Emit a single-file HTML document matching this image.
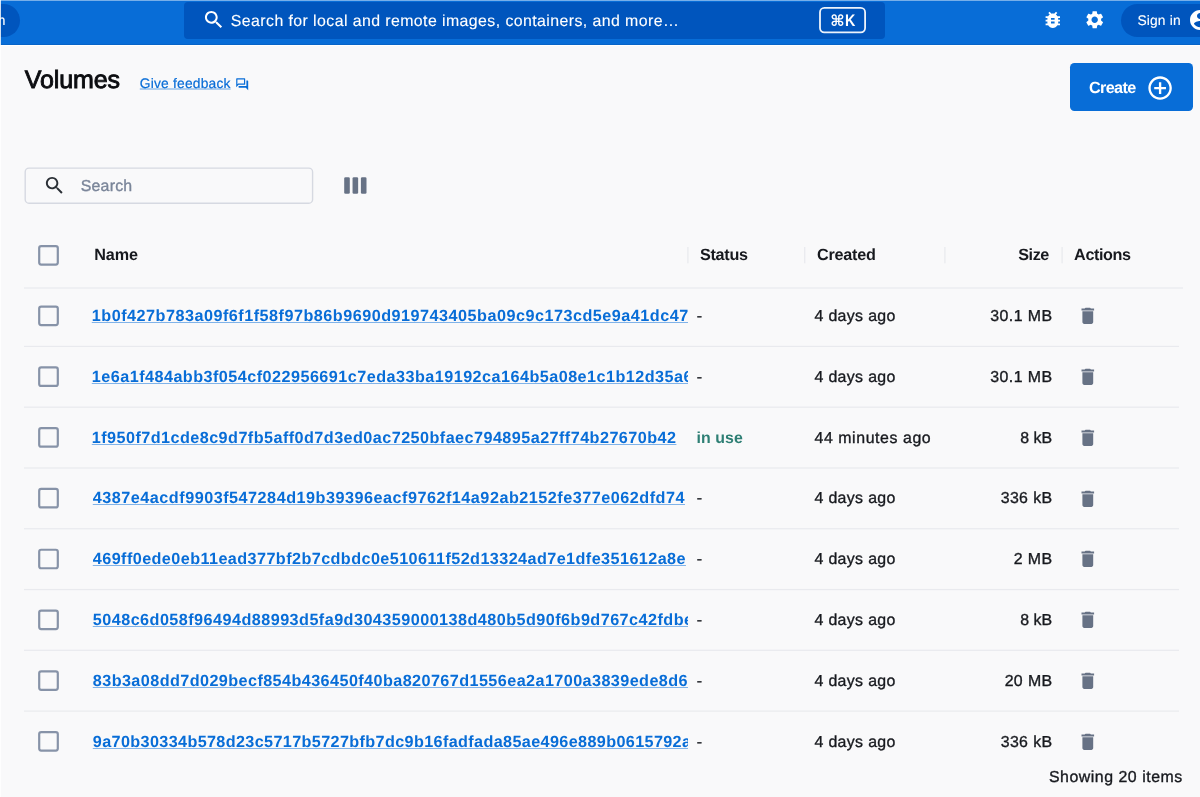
<!DOCTYPE html>
<html><head><meta charset="utf-8"><title>Volumes</title><style>
html,body{margin:0;padding:0}
body{text-rendering:geometricPrecision;width:1200px;height:797px;overflow:hidden;position:relative;background:#f9f9fa;font-family:"Liberation Sans", "DejaVu Sans", sans-serif;}
#w{position:absolute;left:0;top:0;width:1200px;height:797px;will-change:transform}
.t{position:absolute;white-space:nowrap;line-height:1;display:block}
.clip{position:absolute;overflow:hidden}
.lk{text-decoration:underline;text-decoration-color:rgba(8,109,215,.5);text-decoration-thickness:1.1px;text-underline-offset:0.6px;}
</style></head><body><div id="w">
<div style="position:absolute;left:0;top:0;width:1200px;height:44.8px;background:#086dd7"></div>
<div style="position:absolute;left:0;top:43.8px;width:1200px;height:1px;background:#0764c8"></div>
<div style="position:absolute;left:-80px;top:3.7px;width:100px;height:33.2px;border-radius:17px;background:#0055bd"></div>
<div style="position:absolute;left:183.8px;top:1.8px;width:701.2px;height:37.1px;border-radius:4px;background:#0055bd"></div>
<svg style="position:absolute;left:202.1px;top:8.4px" width="23.5" height="23.5" viewBox="0 0 24 24"><path fill="#fff" d="M15.5 14h-.79l-.28-.27C15.41 12.59 16 11.11 16 9.5 16 5.91 13.09 3 9.5 3S3 5.91 3 9.5 5.91 16 9.5 16c1.610 0 3.090-.59 4.230-1.570l.27.28v.79l5 4.990L20.490 19l-4.990-5zm-6 0C7.010 14 5 11.990 5 9.500S7.010 5 9.500 5 14 7.010 14 9.500 11.990 14 9.500 14z"/></svg>
<svg style="position:absolute;left:1042.35px;top:9.0px" width="21.6" height="21.6" viewBox="0 0 24 24"><path fill="#fff" d="M20 8h-2.810c-.45-.78-1.070-1.450-1.820-1.960L17 4.410 15.590 3l-2.170 2.170C12.960 5.060 12.490 5 12 5c-.49 0-.96.060-1.410.17L8.410 3 7 4.410l1.620 1.630C7.880 6.550 7.260 7.220 6.810 8H4v2h2.090c-.05.33-.09.66-.09 1v1H4v2h2v1c0 .34.040.67.090 1H4v2h2.810c1.040 1.790 2.970 3 5.190 3s4.150-1.210 5.190-3H20v-2h-2.090c.05-.33.090-.67.090-1v-1h2v-2h-2v-1c0-.34-.04-.67-.09-1H20V8zm-6 8h-4v-2h4v2zm0-4h-4v-2h4v2z"/></svg>
<svg style="position:absolute;left:1084.2px;top:9.1px" width="21.4" height="21.4" viewBox="0 0 24 24"><path fill="#fff" d="M19.14 12.94c.04-.3.06-.61.06-.94 0-.32-.02-.64-.07-.94l2.030-1.580c.18-.14.23-.41.120-.61l-1.920-3.320c-.12-.22-.37-.29-.59-.22l-2.390.96c-.5-.38-1.030-.7-1.620-.94l-.36-2.540c-.04-.24-.24-.41-.48-.41h-3.840c-.24 0-.43.17-.47.41l-.36 2.540c-.59.24-1.130.57-1.620.94l-2.390-.96c-.22-.08-.47 0-.59.22L2.740 8.870c-.12.21-.08.47.12.61l2.030 1.580c-.05.3-.09.63-.09.94s.02.64.07.94l-2.030 1.580c-.18.14-.23.41-.12.61l1.920 3.320c.12.22.37.29.59.22l2.390-.96c.5.38 1.030.7 1.620.94l.36 2.540c.05.24.24.41.48.41h3.840c.24 0 .44-.17.47-.41l.36-2.540c.59-.24 1.130-.56 1.620-.94l2.390.96c.22.08.47 0 .59-.22l1.920-3.320c.12-.22.07-.47-.12-.61l-2.010-1.580zM12 15.600c-1.980 0-3.600-1.620-3.600-3.600s1.620-3.600 3.600-3.600 3.600 1.620 3.600 3.600-1.620 3.600-3.600 3.600z"/></svg>
<div style="position:absolute;left:1120.8px;top:3.75px;width:120px;height:33px;border-radius:16.5px;background:#0055bd"></div>
<svg style="position:absolute;left:1187.8px;top:8.3px" width="24" height="24" viewBox="0 0 24 24"><path fill="#fff" d="M12 2C6.480 2 2 6.480 2 12s4.480 10 10 10 10-4.480 10-10S17.520 2 12 2zm0 3c1.660 0 3 1.340 3 3s-1.340 3-3 3-3-1.340-3-3 1.340-3 3-3zm0 14.200c-2.500 0-4.710-1.280-6-3.220.03-1.990 4-3.080 6-3.080 1.990 0 5.970 1.090 6 3.080-1.290 1.940-3.500 3.220-6 3.220z"/></svg>
<div style="position:absolute;left:0;top:45px;width:1200px;height:1px;background:#fff"></div>
<div style="position:absolute;left:0;top:0;width:1200px;height:1px;background:rgba(255,255,255,.45)"></div>
<div style="position:absolute;left:0;top:0;width:1px;height:797px;background:rgba(255,255,255,.82)"></div>
<svg style="position:absolute;left:235px;top:77.1px" width="14.4" height="14.4" viewBox="0 0 24 24"><path fill="#086dd7" d="M15 4v7H5.170L4 12.170V4h11m1-2H3c-.55 0-1 .45-1 1v14l4-4h10c.55 0 1-.45 1-1V3c0-.55-.45-1-1-1zm5 4h-2v9H6v2c0 .55.45 1 1 1h11l4 4V7c0-.55-.45-1-1-1z"/></svg>
<div style="position:absolute;left:1070px;top:63.1px;width:122.8px;height:47.8px;border-radius:4.5px;background:#086dd7"></div>
<svg style="position:absolute;left:1145.9px;top:73.6px" width="28.2" height="28.2" viewBox="0 0 24 24"><path fill="#fff" d="M13 7h-2v4H7v2h4v4h2v-4h4v-2h-4V7zm-1-5C6.480 2 2 6.480 2 12s4.480 10 10 10 10-4.480 10-10S17.520 2 12 2zm0 18c-4.410 0-8-3.590-8-8s3.590-8 8-8 8 3.590 8 8-3.590 8-8 8z"/></svg>
<svg style="position:absolute;left:42.8px;top:174.2px" width="23" height="23" viewBox="0 0 24 24"><path fill="#2b3036" d="M15.5 14h-.79l-.28-.27C15.410 12.590 16 11.110 16 9.500 16 5.910 13.090 3 9.500 3S3 5.910 3 9.500 5.910 16 9.500 16c1.610 0 3.090-.59 4.230-1.570l.27.28v.79l5 4.990L20.490 19l-4.990-5zm-6 0C7.010 14 5 11.990 5 9.500S7.010 5 9.500 5 14 7.010 14 9.500 11.990 14 9.500 14z"/></svg>
<svg style="position:absolute;left:0;top:0" width="1200" height="797" viewBox="0 0 1200 797">
<rect x="820" y="7.9" width="45.1" height="24.5" rx="4.3" fill="none" stroke="#fff" stroke-opacity=".93" stroke-width="1.8"/>
<rect x="25.2" y="168.1" width="287.4" height="35.1" rx="3.8" fill="none" stroke="#d6d9e1" stroke-width="1.4"/>
<rect x="344.2" y="177.3" width="5.6" height="16.5" rx="1.3" fill="#677285"/>
<rect x="352.55" y="177.3" width="5.6" height="16.5" rx="1.3" fill="#677285"/>
<rect x="360.9" y="177.3" width="5.6" height="16.5" rx="1.3" fill="#677285"/>
<rect x="687.2" y="247" width="1.4" height="16.3" fill="#eaebef"/>
<rect x="804.0" y="247" width="1.4" height="16.3" fill="#eaebef"/>
<rect x="944.2" y="247" width="1.4" height="16.3" fill="#eaebef"/>
<rect x="1061.4" y="247" width="1.4" height="16.3" fill="#eaebef"/>
<rect x="24" y="286.95" width="1159" height="2.0" fill="#eff0f3"/>
<rect x="24" y="345.80" width="1155" height="1.2" fill="#e9eaee"/>
<rect x="24" y="406.59" width="1155" height="1.2" fill="#e9eaee"/>
<rect x="24" y="467.37" width="1155" height="1.2" fill="#e9eaee"/>
<rect x="24" y="528.16" width="1155" height="1.2" fill="#e9eaee"/>
<rect x="24" y="588.94" width="1155" height="1.2" fill="#e9eaee"/>
<rect x="24" y="649.73" width="1155" height="1.2" fill="#e9eaee"/>
<rect x="24" y="710.52" width="1155" height="1.2" fill="#e9eaee"/>
<rect x="39.2" y="246.05" width="18.6" height="18.5" rx="2" fill="none" stroke="#8793a8" stroke-width="2.2"/>
<rect x="39.2" y="306.60" width="18.6" height="18.5" rx="2" fill="none" stroke="#8793a8" stroke-width="2.2"/>
<rect x="39.2" y="367.39" width="18.6" height="18.5" rx="2" fill="none" stroke="#8793a8" stroke-width="2.2"/>
<rect x="39.2" y="428.17" width="18.6" height="18.5" rx="2" fill="none" stroke="#8793a8" stroke-width="2.2"/>
<rect x="39.2" y="488.96" width="18.6" height="18.5" rx="2" fill="none" stroke="#8793a8" stroke-width="2.2"/>
<rect x="39.2" y="549.74" width="18.6" height="18.5" rx="2" fill="none" stroke="#8793a8" stroke-width="2.2"/>
<rect x="39.2" y="610.53" width="18.6" height="18.5" rx="2" fill="none" stroke="#8793a8" stroke-width="2.2"/>
<rect x="39.2" y="671.32" width="18.6" height="18.5" rx="2" fill="none" stroke="#8793a8" stroke-width="2.2"/>
<rect x="39.2" y="732.10" width="18.6" height="18.5" rx="2" fill="none" stroke="#8793a8" stroke-width="2.2"/>
</svg>
<svg style="position:absolute;left:1076.8px;top:305.25px" width="21.6" height="21.6" viewBox="0 0 24 24"><path fill="#677285" d="M6 19c0 1.100.9 2 2 2h8c1.100 0 2-.9 2-2V7H6v12zM19 4h-3.500l-1-1h-5l-1 1H5v2h14V4z"/></svg>
<svg style="position:absolute;left:1076.8px;top:366.04px" width="21.6" height="21.6" viewBox="0 0 24 24"><path fill="#677285" d="M6 19c0 1.100.9 2 2 2h8c1.100 0 2-.9 2-2V7H6v12zM19 4h-3.500l-1-1h-5l-1 1H5v2h14V4z"/></svg>
<svg style="position:absolute;left:1076.8px;top:426.82px" width="21.6" height="21.6" viewBox="0 0 24 24"><path fill="#677285" d="M6 19c0 1.100.9 2 2 2h8c1.100 0 2-.9 2-2V7H6v12zM19 4h-3.500l-1-1h-5l-1 1H5v2h14V4z"/></svg>
<svg style="position:absolute;left:1076.8px;top:487.61px" width="21.6" height="21.6" viewBox="0 0 24 24"><path fill="#677285" d="M6 19c0 1.100.9 2 2 2h8c1.100 0 2-.9 2-2V7H6v12zM19 4h-3.500l-1-1h-5l-1 1H5v2h14V4z"/></svg>
<svg style="position:absolute;left:1076.8px;top:548.39px" width="21.6" height="21.6" viewBox="0 0 24 24"><path fill="#677285" d="M6 19c0 1.100.9 2 2 2h8c1.100 0 2-.9 2-2V7H6v12zM19 4h-3.500l-1-1h-5l-1 1H5v2h14V4z"/></svg>
<svg style="position:absolute;left:1076.8px;top:609.18px" width="21.6" height="21.6" viewBox="0 0 24 24"><path fill="#677285" d="M6 19c0 1.100.9 2 2 2h8c1.100 0 2-.9 2-2V7H6v12zM19 4h-3.500l-1-1h-5l-1 1H5v2h14V4z"/></svg>
<svg style="position:absolute;left:1076.8px;top:669.97px" width="21.6" height="21.6" viewBox="0 0 24 24"><path fill="#677285" d="M6 19c0 1.100.9 2 2 2h8c1.100 0 2-.9 2-2V7H6v12zM19 4h-3.500l-1-1h-5l-1 1H5v2h14V4z"/></svg>
<svg style="position:absolute;left:1076.8px;top:730.75px" width="21.6" height="21.6" viewBox="0 0 24 24"><path fill="#677285" d="M6 19c0 1.100.9 2 2 2h8c1.100 0 2-.9 2-2V7H6v12zM19 4h-3.500l-1-1h-5l-1 1H5v2h14V4z"/></svg>
<span class="t" style="left:24.75px;top:68.00px;font-size:25px;font-weight:normal;color:#0c0d10;letter-spacing:-0.115px;-webkit-text-stroke:0.9px #0c0d10;">Volumes</span>
<span class="t" style="left:139.80px;top:77.00px;font-size:13.8px;font-weight:normal;color:#086dd7;letter-spacing:0.200px;-webkit-text-stroke:0.2px #086dd7;text-decoration:underline;text-decoration-color:rgba(8,109,215,.3);text-decoration-thickness:1.5px;text-underline-offset:0.3px;">Give feedback</span>
<span class="t" style="left:230.85px;top:14.00px;font-size:15.9px;font-weight:normal;color:#fff;letter-spacing:0.413px;-webkit-text-stroke:0.1px #fff;">Search for local and remote images, containers, and more…</span>
<span class="t" style="left:830.20px;top:14.00px;font-size:15.5px;font-weight:bold;color:#fff;letter-spacing:0.000px;">⌘</span>
<span class="t" style="left:845.00px;top:13.00px;font-size:16.6px;font-weight:bold;color:#fff;letter-spacing:0.000px;transform:scaleX(.86);transform-origin:0 0;">K</span>
<span class="t" style="left:-37.95px;top:14.00px;font-size:13.8px;font-weight:normal;color:#fff;letter-spacing:0.214px;-webkit-text-stroke:0.1px #fff;">Sign in</span>
<span class="t" style="left:1137.45px;top:14.00px;font-size:13.8px;font-weight:normal;color:#fff;letter-spacing:0.164px;-webkit-text-stroke:0.1px #fff;">Sign in</span>
<span class="t" style="left:1089.00px;top:80.00px;font-size:16.2px;font-weight:bold;color:#fff;letter-spacing:-0.638px;">Create</span>
<span class="t" style="left:80.77px;top:179.00px;font-size:15.9px;font-weight:normal;color:#7a8599;letter-spacing:0.206px;-webkit-text-stroke:0.35px #7a8599;">Search</span>
<span class="t" style="left:94.20px;top:247.00px;font-size:16.2px;font-weight:bold;color:#17191e;letter-spacing:-0.064px;">Name</span>
<span class="t" style="left:700.00px;top:247.00px;font-size:16.2px;font-weight:bold;color:#17191e;letter-spacing:-0.296px;">Status</span>
<span class="t" style="left:817.00px;top:247.00px;font-size:16.2px;font-weight:bold;color:#17191e;letter-spacing:-0.232px;">Created</span>
<span class="t" style="left:1018.20px;top:247.00px;font-size:16.2px;font-weight:bold;color:#17191e;letter-spacing:-0.401px;">Size</span>
<span class="t" style="left:1074.10px;top:247.00px;font-size:16.2px;font-weight:bold;color:#17191e;letter-spacing:-0.395px;">Actions</span>
<span class="t" style="left:1048.92px;top:770.00px;font-size:15.9px;font-weight:normal;color:#17191e;letter-spacing:0.527px;-webkit-text-stroke:0.35px #17191e;">Showing 20 items</span>
<div class="clip" style="left:91px;top:304.00px;width:597px;height:26.2px"><a class="t lk" style="left:0.80px;top:4px;font-size:16.2px;font-weight:bold;color:#086dd7;letter-spacing:0.495px;">1b0f427b783a09f6f1f58f97b86b9690d919743405ba09c9c173cd5e9a41dc47</a></div>
<span class="t" style="left:696.67px;top:309.00px;font-size:15.9px;font-weight:normal;color:#17191e;letter-spacing:0.000px;-webkit-text-stroke:0.35px #17191e;">-</span>
<span class="t" style="left:814.47px;top:309.00px;font-size:15.9px;font-weight:normal;color:#17191e;letter-spacing:0.349px;-webkit-text-stroke:0.35px #17191e;">4 days ago</span>
<span class="t" style="left:990.17px;top:309.00px;font-size:15.9px;font-weight:normal;color:#17191e;letter-spacing:0.460px;-webkit-text-stroke:0.35px #17191e;">30.1 MB</span>
<div class="clip" style="left:91px;top:365.00px;width:597px;height:26.2px"><a class="t lk" style="left:0.80px;top:4px;font-size:16.2px;font-weight:bold;color:#086dd7;letter-spacing:0.463px;">1e6a1f484abb3f054cf022956691c7eda33ba19192ca164b5a08e1c1b12d35a6</a></div>
<span class="t" style="left:696.67px;top:370.00px;font-size:15.9px;font-weight:normal;color:#17191e;letter-spacing:0.000px;-webkit-text-stroke:0.35px #17191e;">-</span>
<span class="t" style="left:814.47px;top:370.00px;font-size:15.9px;font-weight:normal;color:#17191e;letter-spacing:0.349px;-webkit-text-stroke:0.35px #17191e;">4 days ago</span>
<span class="t" style="left:990.17px;top:370.00px;font-size:15.9px;font-weight:normal;color:#17191e;letter-spacing:0.460px;-webkit-text-stroke:0.35px #17191e;">30.1 MB</span>
<div class="clip" style="left:91px;top:426.00px;width:597px;height:26.2px"><a class="t lk" style="left:0.80px;top:4px;font-size:16.2px;font-weight:bold;color:#086dd7;letter-spacing:0.445px;">1f950f7d1cde8c9d7fb5aff0d7d3ed0ac7250bfaec794895a27ff74b27670b42</a></div>
<span class="t" style="left:696.50px;top:431.00px;font-size:15.9px;font-weight:bold;color:#2e7f74;letter-spacing:0.083px;">in use</span>
<span class="t" style="left:814.47px;top:431.00px;font-size:15.9px;font-weight:normal;color:#17191e;letter-spacing:0.578px;-webkit-text-stroke:0.35px #17191e;">44 minutes ago</span>
<span class="t" style="left:1020.17px;top:431.00px;font-size:15.9px;font-weight:normal;color:#17191e;letter-spacing:0.051px;-webkit-text-stroke:0.35px #17191e;">8 kB</span>
<div class="clip" style="left:91px;top:486.00px;width:597px;height:26.2px"><a class="t lk" style="left:1.80px;top:4px;font-size:16.2px;font-weight:bold;color:#086dd7;letter-spacing:0.506px;">4387e4acdf9903f547284d19b39396eacf9762f14a92ab2152fe377e062dfd74</a></div>
<span class="t" style="left:696.67px;top:491.00px;font-size:15.9px;font-weight:normal;color:#17191e;letter-spacing:0.000px;-webkit-text-stroke:0.35px #17191e;">-</span>
<span class="t" style="left:814.47px;top:491.00px;font-size:15.9px;font-weight:normal;color:#17191e;letter-spacing:0.349px;-webkit-text-stroke:0.35px #17191e;">4 days ago</span>
<span class="t" style="left:1000.67px;top:491.00px;font-size:15.9px;font-weight:normal;color:#17191e;letter-spacing:0.393px;-webkit-text-stroke:0.35px #17191e;">336 kB</span>
<div class="clip" style="left:91px;top:547.00px;width:597px;height:26.2px"><a class="t lk" style="left:1.80px;top:4px;font-size:16.2px;font-weight:bold;color:#086dd7;letter-spacing:0.423px;">469ff0ede0eb11ead377bf2b7cdbdc0e510611f52d13324ad7e1dfe351612a8e</a></div>
<span class="t" style="left:696.67px;top:552.00px;font-size:15.9px;font-weight:normal;color:#17191e;letter-spacing:0.000px;-webkit-text-stroke:0.35px #17191e;">-</span>
<span class="t" style="left:814.47px;top:552.00px;font-size:15.9px;font-weight:normal;color:#17191e;letter-spacing:0.349px;-webkit-text-stroke:0.35px #17191e;">4 days ago</span>
<span class="t" style="left:1013.67px;top:552.00px;font-size:15.9px;font-weight:normal;color:#17191e;letter-spacing:0.452px;-webkit-text-stroke:0.35px #17191e;">2 MB</span>
<div class="clip" style="left:91px;top:608.00px;width:597px;height:26.2px"><a class="t lk" style="left:1.80px;top:4px;font-size:16.2px;font-weight:bold;color:#086dd7;letter-spacing:0.456px;">5048c6d058f96494d88993d5fa9d304359000138d480b5d90f6b9d767c42fdbe</a></div>
<span class="t" style="left:696.67px;top:613.00px;font-size:15.9px;font-weight:normal;color:#17191e;letter-spacing:0.000px;-webkit-text-stroke:0.35px #17191e;">-</span>
<span class="t" style="left:814.47px;top:613.00px;font-size:15.9px;font-weight:normal;color:#17191e;letter-spacing:0.349px;-webkit-text-stroke:0.35px #17191e;">4 days ago</span>
<span class="t" style="left:1020.17px;top:613.00px;font-size:15.9px;font-weight:normal;color:#17191e;letter-spacing:0.051px;-webkit-text-stroke:0.35px #17191e;">8 kB</span>
<div class="clip" style="left:91px;top:669.00px;width:597px;height:26.2px"><a class="t lk" style="left:1.80px;top:4px;font-size:16.2px;font-weight:bold;color:#086dd7;letter-spacing:0.419px;">83b3a08dd7d029becf854b436450f40ba820767d1556ea2a1700a3839ede8d6f</a></div>
<span class="t" style="left:696.67px;top:674.00px;font-size:15.9px;font-weight:normal;color:#17191e;letter-spacing:0.000px;-webkit-text-stroke:0.35px #17191e;">-</span>
<span class="t" style="left:814.47px;top:674.00px;font-size:15.9px;font-weight:normal;color:#17191e;letter-spacing:0.349px;-webkit-text-stroke:0.35px #17191e;">4 days ago</span>
<span class="t" style="left:1004.67px;top:674.00px;font-size:15.9px;font-weight:normal;color:#17191e;letter-spacing:0.378px;-webkit-text-stroke:0.35px #17191e;">20 MB</span>
<div class="clip" style="left:91px;top:730.00px;width:597px;height:26.2px"><a class="t lk" style="left:1.80px;top:4px;font-size:16.2px;font-weight:bold;color:#086dd7;letter-spacing:0.367px;">9a70b30334b578d23c5717b5727bfb7dc9b16fadfada85ae496e889b0615792a</a></div>
<span class="t" style="left:696.67px;top:735.00px;font-size:15.9px;font-weight:normal;color:#17191e;letter-spacing:0.000px;-webkit-text-stroke:0.35px #17191e;">-</span>
<span class="t" style="left:814.47px;top:735.00px;font-size:15.9px;font-weight:normal;color:#17191e;letter-spacing:0.349px;-webkit-text-stroke:0.35px #17191e;">4 days ago</span>
<span class="t" style="left:1000.67px;top:735.00px;font-size:15.9px;font-weight:normal;color:#17191e;letter-spacing:0.393px;-webkit-text-stroke:0.35px #17191e;">336 kB</span>
</div></body></html>
